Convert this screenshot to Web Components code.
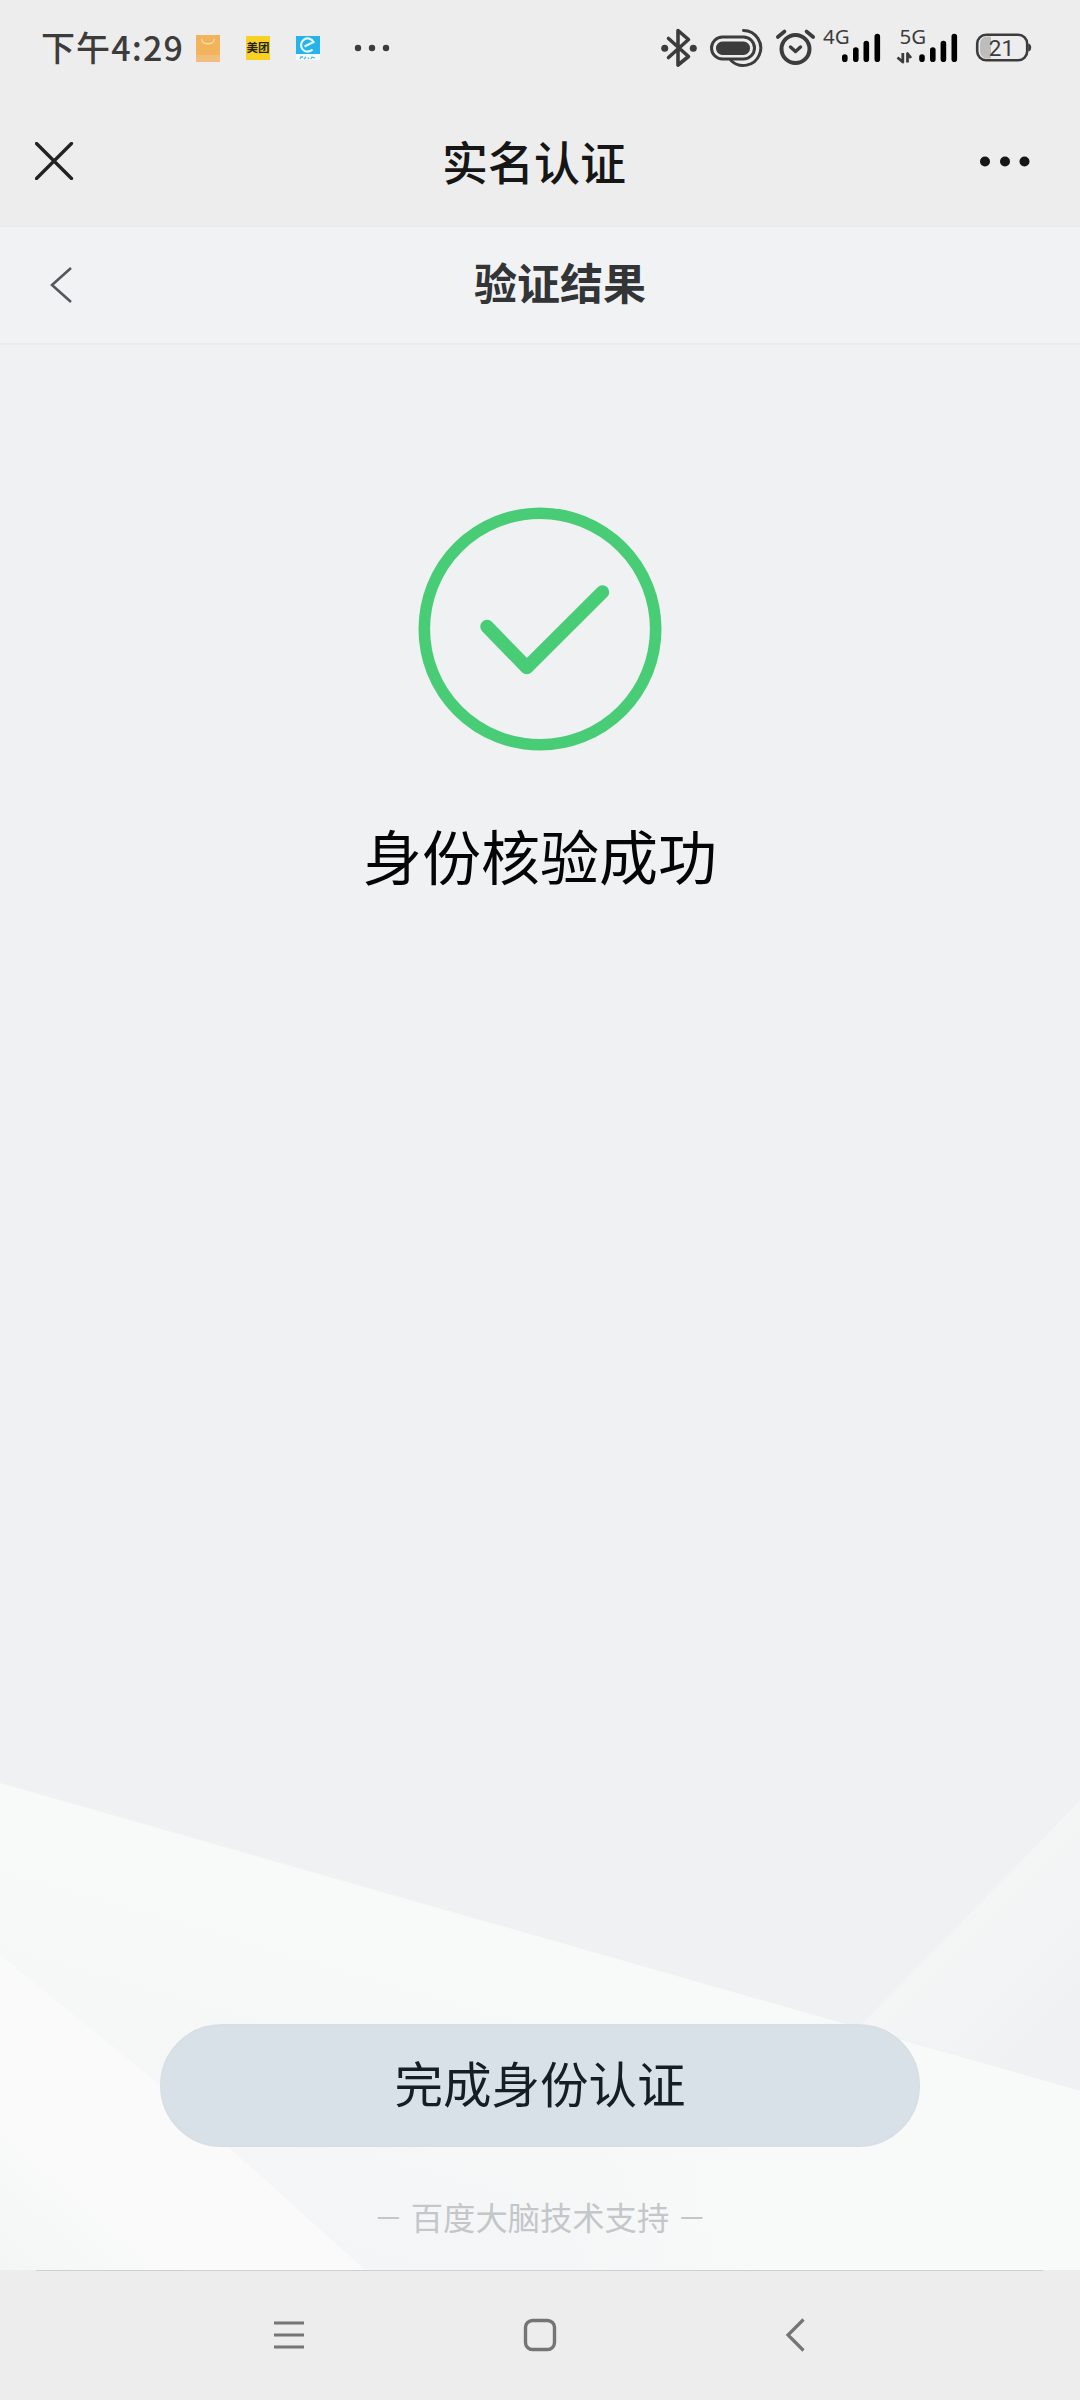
<!DOCTYPE html>
<html lang="zh-CN">
<head>
<meta charset="utf-8">
<title>实名认证</title>
<style>
    html, body {
        margin: 0;
        padding: 0;
    }
    body {
        width: 1080px;
        height: 2400px;
        overflow: hidden;
        background: #ededed;
        font-family: "Noto Sans CJK SC", sans-serif;
    }
</style>
</head>
<body>
<phone-screen>
    <status-bar slot="top" time="下午4:29" battery="21"></status-bar>
    <app-header slot="top">实名认证</app-header>
    <page-header slot="top">验证结果</page-header>
    <result-status>身份核验成功</result-status>
    <action-button slot="bottom">完成身份认证</action-button>
    <support-note slot="bottom">百度大脑技术支持</support-note>
    <nav-bar slot="nav"></nav-bar>
</phone-screen>

<script>
class BaseElement extends HTMLElement {
    constructor() {
        super();
        this.shadow = this.attachShadow({mode: 'open'});
    }

    connectedCallback() {
        this.shadow.innerHTML = this.render();
    }
}

class PhoneScreen extends BaseElement {
    render() {
        return `
            <style>
                :host {
                    display: flex;
                    flex-direction: column;
                    width: 1080px;
                    height: 2400px;
                }
                main {
                    flex: 1;
                    display: flex;
                    flex-direction: column;
                    justify-content: space-between;
                    position: relative;
                    background: #eff1f3;
                }
                .rays {
                    position: absolute;
                    left: 0;
                    bottom: 0;
                }
                .bottom {
                    position: relative;
                    display: flex;
                    flex-direction: column;
                    align-items: center;
                    gap: 45px;
                    padding-bottom: 30px;
                }
            </style>
            <slot name="top"></slot>
            <main>
                <svg class="rays" width="1080" height="500" viewBox="0 1770 1080 500">
                    <defs>
                        <linearGradient id="sheet" gradientUnits="userSpaceOnUse" x1="300" y1="1860" x2="190" y2="2240">
                            <stop offset="0" stop-color="#f8f9f9"/>
                            <stop offset=".35" stop-color="#f7f8f8"/>
                            <stop offset="1" stop-color="#f3f5f6"/>
                        </linearGradient>
                        <linearGradient id="right" gradientUnits="userSpaceOnUse" x1="970" y1="1910" x2="1070" y2="2010">
                            <stop offset="0" stop-color="#f4f6f6"/>
                            <stop offset="1" stop-color="#eff1f3"/>
                        </linearGradient>
                        <linearGradient id="left" gradientUnits="userSpaceOnUse" x1="190" y1="2110" x2="30" y2="2290">
                            <stop offset="0" stop-color="#fafafa"/>
                            <stop offset=".5" stop-color="#f9faf9"/>
                            <stop offset="1" stop-color="#f4f6f6"/>
                        </linearGradient>
                        <linearGradient id="glow" gradientUnits="userSpaceOnUse" x1="560" y1="0" x2="760" y2="0">
                            <stop offset="0" stop-color="#f8f9f9" stop-opacity="0"/>
                            <stop offset="1" stop-color="#f8f9f9"/>
                        </linearGradient>
                    </defs>
                    <path d="M1080 1801L860 2026L1080 2092z" fill="url(#right)"/>
                    <path d="M0 1783L1080 2091V2270H0z" fill="url(#sheet)"/>
                    <path d="M560 1943L1080 2091V2270H560z" fill="url(#glow)"/>
                    <path d="M0 1955L160 2085L365 2270H0z" fill="url(#left)"/>
                </svg>
                <slot></slot>
                <div class="bottom"><slot name="bottom"></slot></div>
            </main>
            <slot name="nav"></slot>
        `;
    }
}

class StatusBar extends BaseElement {
    render() {
        return `
            <style>
                :host {
                    display: flex;
                    align-items: center;
                    justify-content: space-between;
                    box-sizing: border-box;
                    height: 96px;
                    padding: 0 48px 0 41px;
                    background: #ededed;
                    color: #3c3c3c;
                }
                .group {
                    display: flex;
                    align-items: center;
                }
                .time {
                    width: 155px;
                    padding-bottom: 2px;
                    font-size: 34px;
                    font-weight: 500;
                    letter-spacing: 1.100px;
                    line-height: 48px;
                    white-space: nowrap;
                }
                svg {
                    display: block;
                    overflow: visible;
                }
                .meituan {
                    width: 24px;
                    height: 24px;
                    margin: 0 26px;
                    background: #f9d122;
                    color: #222;
                    font-size: 11.500px;
                    font-weight: 700;
                    line-height: 23px;
                    text-align: center;
                    white-space: nowrap;
                }
                .dots { margin-left: 34px; }
                .net {
                    font-family: "Noto Sans", sans-serif;
                    font-size: 20.500px;
                    fill: #3c3c3c;
                }
                .level {
                    font-family: Roboto, sans-serif;
                    font-size: 22.500px;
                    fill: #3c3c3c;
                }
            </style>
            <div class="group">
                <div class="time">${this.getAttribute('time')}</div>
                <svg width="24" height="27" viewBox="0 0 24 27">
                    <path d="M0 0h24v27H0z" fill="#f1b45b"/>
                    <path d="M0 20h24v7H0z" fill="#f3bd7c"/>
                    <path d="M5.500 4c1 6.500 12 6.500 13 0" fill="none" stroke="#fbe3b8" stroke-width="1.200"/>
                </svg>
                <div class="meituan">美团</div>
                <svg width="24" height="24" viewBox="0 0 24 24">
                    <path d="M0 0h24v18H0z" fill="#25b3ea"/>
                    <path d="M0 18h24v6H0z" fill="#f4fafc"/>
                    <path d="M8.500 10.500L17.500 6A6.600 6.600 0 1 0 16.500 13.500" fill="none" stroke="#e6f7fd" stroke-width="2.200"/>
                    <path d="M4 23l1-2 2 0M8 23l2-2M12 21.500l1 1.500M15 23l1-2 3 1" fill="none" stroke="#4bbfe8" stroke-width="1.300"/>
                </svg>
                <svg class="dots" width="36" height="8" viewBox="0 0 36 8" fill="#3c3c3c">
                    <circle cx="4" cy="4" r="3.200"/><circle cx="18" cy="4" r="3.200"/><circle cx="32" cy="4" r="3.200"/>
                </svg>
            </div>
            <svg width="372" height="44" viewBox="660 26 372 44" fill="none" stroke="#3c3c3c" stroke-linecap="round" stroke-linejoin="round">
                <!-- bluetooth -->
                <path d="M668.500 38.500L688.500 56.500L678 65V30.500L688.500 39.500L668.500 57.500" stroke-width="3.600"/>
                <g fill="#3c3c3c" stroke="none"><circle cx="664.700" cy="48.300" r="3.500"/><circle cx="693.300" cy="48.300" r="3.500"/></g>
                <!-- wearable -->
                <rect x="711.500" y="37" width="43" height="22" rx="11" stroke-width="3"/>
                <rect x="716" y="41.500" width="34" height="13.500" rx="6.500" fill="#3c3c3c" stroke="none"/>
                <path d="M743.500 30.500A17.500 17.500 0 1 1 731 60.500" stroke-width="3"/>
                <!-- alarm -->
                <circle cx="795.500" cy="49" r="14" stroke-width="4"/>
                <path d="M777.800 37L784.500 31.500M813.200 37L806.500 31.500" stroke-width="3.600"/>
                <path d="M790.500 47L795.500 51.500L800.500 47" stroke-width="3.400"/>
                <!-- signal -->
                <path d="M844.800 57v2.300M855.800 50v9.300M866.300 43.500v15.800M877.300 36.500v22.800" stroke="#000" stroke-width="5.600"/>
                <path d="M922 57v2.300M932.800 50v9.300M943.400 43.500v15.800M954.300 36.500v22.800" stroke="#000" stroke-width="5.600"/>
                <path d="M897.500 57.500L902.800 62V53M911 58L907.500 53.500V62.500" stroke-width="2.800" stroke-linecap="butt"/>
                <!-- battery -->
                <path d="M987 36.500h4v22h-4a7 7 0 0 1-7-7v-8a7 7 0 0 1 7-7z" fill="#bdbdbd" stroke="none"/>
                <rect x="977.200" y="34.700" width="50" height="25.500" rx="9" stroke-width="2.600"/>
                <path d="M1029 44.500c2 1 2 5 0 6z" fill="#3c3c3c" stroke-width="1.500"/>
                <g stroke="none">
                    <text class="net" x="823" y="44">4G</text>
                    <text class="net" x="899.500" y="44">5G</text>
                    <text class="level" x="1001.500" y="55.500" text-anchor="middle">${this.getAttribute('battery')}</text>
                </g>
            </svg>
        `;
    }
}

class AppHeader extends BaseElement {
    render() {
        return `
            <style>
                :host {
                    display: flex;
                    align-items: center;
                    justify-content: space-between;
                    box-sizing: border-box;
                    height: 131px;
                    padding: 0 50px 0 35px;
                    background: #ededed;
                    border-bottom: 1px solid #e8e9ea;
                    color: #161616;
                    font-size: 46px;
                    font-weight: 500;
                    line-height: 60px;
                }
                div { padding-bottom: 2px; }
            </style>
            <svg width="53" height="38" viewBox="0 0 53 38" fill="none" stroke="#222" stroke-width="3.300" stroke-linecap="round">
                <path d="M1.500 1.500l35 35M36.500 1.500l-35 35"/>
            </svg>
            <div><slot></slot></div>
            <svg width="50" height="12" viewBox="0 0 50 12" fill="#161616">
                <circle cx="5" cy="6.500" r="5"/><circle cx="25" cy="6.500" r="5"/><circle cx="44.500" cy="6.500" r="5"/>
            </svg>
        `;
    }
}

class PageHeader extends BaseElement {
    render() {
        return `
            <style>
                :host {
                    display: flex;
                    align-items: center;
                    box-sizing: border-box;
                    height: 118px;
                    padding: 0 50px;
                    background: #f0f2f4;
                    border-bottom: 2px solid #e9ebed;
                    color: #323436;
                    font-size: 43px;
                    font-weight: 700;
                    line-height: 60px;
                }
                div {
                    flex: 1;
                    padding: 0 0 8px 18px;
                    text-align: center;
                }
            </style>
            <svg width="22" height="36" viewBox="0 0 22 36" fill="none" stroke="#55585b" stroke-width="2.600">
                <path d="M21 1L2 18l19 17"/>
            </svg>
            <div><slot></slot></div>
        `;
    }
}

class ResultStatus extends BaseElement {
    render() {
        return `
            <style>
                :host {
                    display: flex;
                    flex-direction: column;
                    align-items: center;
                    gap: 61px;
                    padding-top: 162px;
                    position: relative;
                    color: #050505;
                    font-size: 59px;
                    line-height: 86px;
                }
            </style>
            <svg width="244" height="244" viewBox="-122 -122 244 244" fill="none" stroke="#49cc76">
                <circle r="115.700" stroke-width="11.600"/>
                <path d="M-53-2.500L-13.200 38.500L62.500-37" stroke-width="13.500" stroke-linecap="round" stroke-linejoin="round"/>
            </svg>
            <div><slot></slot></div>
        `;
    }
}

class ActionButton extends BaseElement {
    render() {
        return `
            <style>
                :host {
                    display: block;
                    box-sizing: border-box;
                    width: 760px;
                    height: 123px;
                    border: 2px solid #d8dfe4;
                    border-radius: 62px;
                    background: #d9e1e8;
                    color: #141e26;
                    font-size: 48.500px;
                    line-height: 113px;
                    text-align: center;
                    user-select: none;
                    cursor: pointer;
                }
            </style>
            <slot></slot>
        `;
    }
}

class SupportNote extends BaseElement {
    render() {
        return `
            <style>
                :host {
                    display: flex;
                    align-items: center;
                    gap: 12px;
                    color: #c3c7ca;
                    font-size: 32.300px;
                    line-height: 48px;
                }
                .dash {
                    font-family: "Liberation Sans", sans-serif;
                    font-size: 21px;
                    font-weight: 700;
                }
            </style>
            <span class="dash">—</span>
            <span><slot></slot></span>
            <span class="dash">—</span>
        `;
    }
}

class NavBar extends BaseElement {
    render() {
        return `
            <style>
                :host {
                    display: flex;
                    flex-direction: column;
                    height: 130px;
                    background: #ededed;
                }
                .line {
                    height: 1px;
                    margin: 0 37px 0 36px;
                    background: #cdd1d1;
                }
                .keys {
                    display: flex;
                    align-items: center;
                    height: 128px;
                    padding-left: 273px;
                }
                .home { margin: 0 228px 0 218px; }
            </style>
            <div class="line"></div>
            <div class="keys">
                <svg width="32" height="34" viewBox="0 0 32 34" stroke="#757575" stroke-width="3.200">
                    <path d="M1 5h30M1 17h30M1 29h30"/>
                </svg>
                <svg class="home" width="34" height="34" viewBox="0 0 34 34" fill="none" stroke="#757575" stroke-width="3.400">
                    <rect x="2.500" y="2.500" width="29" height="29" rx="7"/>
                </svg>
                <svg width="20" height="34" viewBox="0 0 20 34" fill="none" stroke="#757575" stroke-width="3.200">
                    <path d="M18.500 1.500L3 17l15.500 15.500"/>
                </svg>
            </div>
        `;
    }
}

customElements.define('phone-screen', PhoneScreen);
customElements.define('status-bar', StatusBar);
customElements.define('app-header', AppHeader);
customElements.define('page-header', PageHeader);
customElements.define('result-status', ResultStatus);
customElements.define('action-button', ActionButton);
customElements.define('support-note', SupportNote);
customElements.define('nav-bar', NavBar);
</script>
</body>
</html>
